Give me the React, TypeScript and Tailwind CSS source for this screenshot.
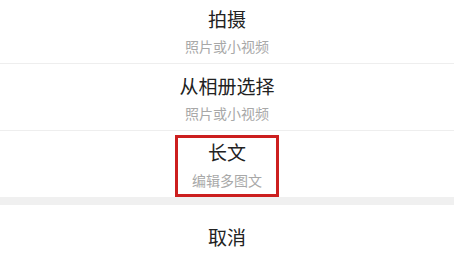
const FONT = "font-['Noto_Sans_CJK_SC','Noto_Sans',sans-serif]";

export default function App() {
  return (
    <div className={`w-[454px] h-[265px] overflow-hidden bg-white ${FONT}`}>
      <div className="flex flex-col items-center pt-[7px] pb-[7px] border-b border-[#eeeeee]">
        <div className="text-[19px] leading-[24px] text-[#222222]">拍摄</div>
        <div className="mt-[5px] text-[14px] leading-[20px] text-[#a8a8a8]">照片或小视频</div>
      </div>
      <div className="flex flex-col items-center pt-[10px] pb-[7px] border-b border-[#eeeeee]">
        <div className="text-[19px] leading-[24px] text-[#222222]">从相册选择</div>
        <div className="mt-[5px] text-[14px] leading-[20px] text-[#a8a8a8]">照片或小视频</div>
      </div>
      <div className="flex justify-center pt-[4px]">
        <div className="w-[104px] h-[62px] border-[3px] border-[#cc1f1f] flex flex-col items-center pt-[2px]">
          <div className="text-[19px] leading-[24px] text-[#222222]">长文</div>
          <div className="mt-[6px] text-[14px] leading-[20px] text-[#a8a8a8]">编辑多图文</div>
        </div>
      </div>
      <div className="h-[8px] bg-[#f0f0f0]" />
      <div className="flex justify-center pt-[20px]">
        <div className="text-[19px] leading-[24px] text-[#222222]">取消</div>
      </div>
    </div>
  );
}
